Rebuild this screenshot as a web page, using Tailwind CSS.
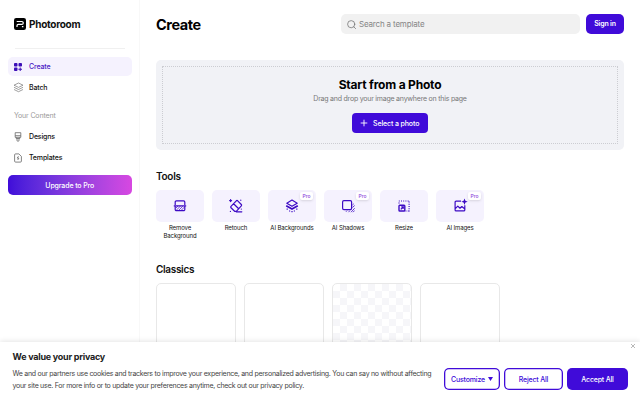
<!DOCTYPE html>
<html lang="en">
<head>
<meta charset="utf-8">
<title>Photoroom</title>
<script src="https://cdn.jsdelivr.net/npm/@tailwindcss/browser@4"></script>
</head>
<body class="relative flex h-[400px] w-[640px] overflow-hidden bg-white font-['Inter',sans-serif] text-[#111]">
  <aside class="flex h-full w-[140px] shrink-0 flex-col border-r border-[#f8f8f8] pr-[7.5px] pl-2">
    <div class="ml-1.5 mt-[18px] flex h-3 items-center gap-[3px]">
      <svg class="size-3 shrink-0" viewBox="0 0 12 12" fill="none"><rect width="12" height="12" rx="2.2" fill="#000"/><path d="M2.7 3.5H7.8a1.4 1.4 0 0 1 0 2.9H4.3a1.3 1.3 0 0 0-1.3 1.3V8.9M7.9 8.6h1.5" stroke="#fff" stroke-width="1.2"/></svg>
      <span class="text-[10px] font-bold tracking-[-0.28px] whitespace-nowrap">Photoroom</span>
    </div>
    <div class="mx-[7px] mt-[18px] h-px bg-[#f0f0f0]"></div>
    <nav class="mt-2 flex flex-col text-[7px] font-medium tracking-[-0.15px]">
      <a class="flex h-[19px] items-center gap-[7px] rounded-[5px] bg-[#f5f2fe] pl-[6px] text-[#4a20c4]">
        <svg class="size-2" viewBox="0 0 8 8" fill="#3d10b8"><rect width="3.5" height="3.5" rx=".9"/><rect x="4.5" width="3.5" height="3.5" rx=".9"/><rect y="4.5" width="3.5" height="3.5" rx=".9"/><path d="M5.7 4.4h1v1.3H8v1H6.7V8h-1V6.7H4.4v-1h1.3z"/></svg><span class="pt-[2px]">Create</span>
      </a>
      <a class="mt-[2px] flex h-[19px] items-center gap-[5px] pl-[5px]">
        <svg class="size-[11px]" viewBox="0 0 11 11" fill="none" stroke="#777" stroke-width=".7" stroke-linejoin="round"><path d="M5.5 1L10 3.2 5.5 5.4 1 3.2zM1 5.3L5.5 7.5 10 5.3M1 7.5L5.5 9.7 10 7.5"/></svg><span class="pt-[2px]">Batch</span>
      </a>
      <span class="mt-[13px] pl-1.5 leading-[11px] font-normal text-[#999]">Your Content</span>
      <a class="mt-[6px] flex h-[19px] items-center gap-[6px] pl-[5px]">
        <svg class="size-[10px]" viewBox="0 0 10 10" fill="none" stroke="#666" stroke-width=".8" stroke-linejoin="round"><path d="M2.2.7h5.6v4.6H2.2zM2.2 3.7h5.6M3.2 5.3v1.2h3.6V5.3M4 6.5v1.8a1 1 0 0 0 2 0V6.5"/></svg><span class="pt-[2px]">Designs</span>
      </a>
      <a class="mt-[2px] flex h-[19px] items-center gap-[6px] pl-[5px]">
        <svg class="size-[10px]" viewBox="0 0 10 10" fill="none" stroke="#666" stroke-width=".8" stroke-linejoin="round"><path d="M2.6.9h3.2L8.4 3.4v4.7a1 1 0 0 1-1 1H2.6a1 1 0 0 1-1-1V1.9a1 1 0 0 1 1-1zM5.5 3.2L4.2 5.1h1.7L4.7 7"/></svg><span class="pt-[2px]">Templates</span>
      </a>
    </nav>
    <button class="mt-2 h-5 rounded-[5px] bg-linear-to-r from-[#400bd9] to-[#d748e1] pt-[2px] text-[7px] font-medium tracking-[-0.12px] text-white">Upgrade to Pro</button>
  </aside>

  <main class="flex w-[500px] flex-col pl-4 pr-4">
    <header class="mt-[14px] flex h-5 items-center">
      <h1 class="w-[184.5px] pt-px text-[14.5px] font-bold tracking-[-0.45px] text-black">Create</h1>
      <label class="flex h-5 w-[239.5px] items-center gap-[3px] rounded-[5px] bg-[#f1f1f1] pl-[6.5px] text-[8px] tracking-[-0.17px] text-[#858585]">
        <svg class="size-[9px]" viewBox="0 0 9 9" fill="none" stroke="#777" stroke-width=".8" stroke-linecap="round"><circle cx="4.2" cy="4.2" r="3.6"/><path d="M6.8 6.8L8.6 8.6"/></svg>
        <span>Search a template</span>
      </label>
      <button class="ml-1.5 h-5 w-[38px] rounded-[5px] bg-[#400bd9] pt-px text-[7px] font-semibold tracking-[-0.18px] text-white">Sign in</button>
    </header>

    <section class="mt-[26px] h-[90px] rounded-[5px] bg-[#f1f2f6] p-[6px]">
      <div class="flex h-full flex-col items-center border border-dotted border-[#cccdd2]">
        <h2 class="mt-[10px] text-[12px] leading-4 font-bold tracking-[-0.2px] text-black">Start from a Photo</h2>
        <p class="mt-px text-[7px] leading-[10px] tracking-[-0.22px] text-[#777]">Drag and drop your image anywhere on this page</p>
        <button class="mt-[9px] flex h-5 w-[76px] items-center gap-[5px] rounded-[4px] bg-[#400bd9] pl-2 text-[7px] font-medium tracking-[-0.12px] whitespace-nowrap text-white">
          <svg class="size-2 shrink-0" viewBox="0 0 8 8" stroke="#fff" stroke-width=".9"><path d="M4 .7v6.6M.7 4h6.6"/></svg><span class="pt-[2px]">Select a photo</span>
        </button>
      </div>
    </section>

    <h3 class="mt-[20px] text-[10px] leading-3 font-semibold tracking-[-0.28px]">Tools</h3>
    <section class="mt-2 flex gap-2 text-center text-[6px] leading-[8px] tracking-[-0.1px]">
      <div class="w-12">
        <div class="flex h-8 items-center justify-center rounded-[5px] bg-[#f5f2fe]">
          <svg class="size-[14px]" viewBox="0 0 14 14" fill="none" stroke="#3d0ac4" stroke-width="1.2"><path d="M2.2 6V3a1.2 1.2 0 0 1 1.2-1.2h7.2A1.2 1.2 0 0 1 11.8 3v3M.8 6.8h12.4M2.2 7.5v3a1.2 1.2 0 0 0 1.2 1.2h7.2a1.2 1.2 0 0 0 1.2-1.2v-3"/><path d="M3 9l2-2M3.2 11.3l4.2-4.2M5.7 11.3l4.2-4.2M8.2 11.3l3.2-3.2" stroke-width=".7"/></svg>
        </div>
        <p class="mt-[2px]">Remove<br>Background</p>
      </div>
      <div class="w-12">
        <div class="flex h-8 items-center justify-center rounded-[5px] bg-[#f5f2fe]">
          <svg class="size-[14px]" viewBox="0 0 14 14" fill="none" stroke="#3d0ac4" stroke-width="1.2" stroke-linejoin="round" stroke-linecap="round"><path d="M2 7.4l5.3-5.6a1 1 0 0 1 1.4 0l3.6 3.7a1 1 0 0 1 0 1.4l-5 5.4H5.6L2 8.8a1 1 0 0 1 0-1.4zM4.6 4.8l5.1 5M7.3 12.8h5.5M1.6.6v2M.6 1.6h2M11.8 1.2v.1M1.4 12.3v.1M12.3 10v.1"/></svg>
        </div>
        <p class="mt-[2px]">Retouch</p>
      </div>
      <div class="w-12">
        <div class="relative flex h-8 items-center justify-center rounded-[5px] bg-[#f5f2fe]">
          <svg class="size-[14px]" viewBox="0 0 14 14" fill="none" stroke="#3d0ac4" stroke-width="1.2" stroke-linejoin="round"><path d="M7 1.1l5.2 3.1L7 7.3 1.8 4.2z"/><path d="M1.2 6.8L7 10l5.8-3.2" stroke-width="1.8"/><path d="M1.6 10.2h1.2M4 12h1.2M6.4 12.6h1.2M8.8 12H10M11.2 10.2h1.2"/></svg>
          <span class="absolute top-[2px] right-[3px] h-[8px] w-[13px] rounded-[2px] bg-white text-[5px] leading-[8px] font-medium text-[#8e48dc] shadow-sm">Pro</span>
        </div>
        <p class="-mx-1 mt-[2px] whitespace-nowrap">AI Backgrounds</p>
      </div>
      <div class="w-12">
        <div class="relative flex h-8 items-center justify-center rounded-[5px] bg-[#f5f2fe]">
          <svg class="size-[14px]" viewBox="0 0 14 14" fill="none" stroke="#3d0ac4" stroke-width="1.2"><rect x="1.6" y="1.6" width="9" height="9" rx="1.3"/><path d="M11.4 6l1.4-1.2M11.4 8.5l2.3-2M5 12.8l1-1.2M7.5 13.2l1.4-1.6M10 13.2l3.7-4M12 13.2l1.7-1.7" stroke-width=".8"/></svg>
          <span class="absolute top-[2px] right-[3px] h-[8px] w-[13px] rounded-[2px] bg-white text-[5px] leading-[8px] font-medium text-[#8e48dc] shadow-sm">Pro</span>
        </div>
        <p class="mt-[2px] whitespace-nowrap">AI Shadows</p>
      </div>
      <div class="w-12">
        <div class="flex h-8 items-center justify-center rounded-[5px] bg-[#f5f2fe]">
          <svg class="size-[14px]" viewBox="0 0 14 14" fill="none" stroke="#3d0ac4" stroke-width="1.2"><path d="M1.8 2h11M12.1 2.6v10M2 3.5v1.4M8.5 12H12" stroke-dasharray="1 1.2"/><rect x="2" y="6.2" width="5.8" height="5.8" rx=".8" stroke-width="1.4"/><path d="M3.8 10.3l2.5-2.5M4.3 7.8h2v2"/></svg>
        </div>
        <p class="mt-[2px]">Resize</p>
      </div>
      <div class="w-12">
        <div class="relative flex h-8 items-center justify-center rounded-[5px] bg-[#f5f2fe]">
          <svg class="size-[14px] overflow-visible" viewBox="0 0 14 14" fill="none" stroke="#3d0ac4" stroke-width="1.2" stroke-linejoin="round"><path d="M8 2.2H3.1a1 1 0 0 0-1 1v7.7a1 1 0 0 0 1 1h7.7a1 1 0 0 0 1-1V6.3M2.3 9.7l2.5-2.6 2.2 2.1 1.8-1.7 2.8 2.3"/><path d="M11.5-.5l.9 2.3 2.3.9-2.3.9-.9 2.3-.9-2.3-2.3-.9 2.3-.9z" fill="#3d0ac4" stroke="none"/></svg>
          <span class="absolute top-[2px] right-[3px] h-[8px] w-[13px] rounded-[2px] bg-white text-[5px] leading-[8px] font-medium text-[#8e48dc] shadow-sm">Pro</span>
        </div>
        <p class="mt-[2px] whitespace-nowrap">AI Images</p>
      </div>
    </section>

    <h3 class="mt-[23px] text-[10px] leading-3 font-semibold tracking-[-0.32px]">Classics</h3>
    <section class="mt-2 flex gap-2">
      <div class="h-20 w-20 rounded-[5px] border border-[#e8e8e8]"></div>
      <div class="h-20 w-20 rounded-[5px] border border-[#e8e8e8]"></div>
      <div class="h-20 w-20 rounded-[5px] border border-[#e8e8e8] bg-[conic-gradient(#f6f6f9_25%,#fff_0_50%,#f6f6f9_0_75%,#fff_0)] bg-size-[14px_14px]"></div>
      <div class="h-20 w-20 rounded-[5px] border border-[#e8e8e8]"></div>
    </section>
  </main>

  <section class="absolute inset-x-0 bottom-0 flex h-[58px] bg-white pl-[12.5px] shadow-[0_-1px_5px_rgba(0,0,0,0.1)]">
    <div class="w-[431.5px] shrink-0 pt-[8px]">
      <h2 class="pt-px text-[9px] leading-3 font-bold tracking-[-0.24px] text-[#212121]">We value your privacy</h2>
      <p class="mt-[5px] text-[7px] leading-3 tracking-[-0.278px] whitespace-nowrap text-[#444]">We and our partners use cookies and trackers to improve your experience, and personalized advertising. You can say no without affecting<br>your site use. For more info or to update your preferences anytime, check out our privacy policy.</p>
    </div>
    <div class="mt-[26px] flex h-[22px] gap-1 text-[7px] font-medium tracking-[-0.18px] text-[#400bd9]">
      <button class="flex w-[56px] items-center justify-center gap-[3px] rounded-[5px] shadow-[inset_0_0_0_1.3px_#400bd9]"><span class="pt-[2px]">Customize</span><svg class="h-1 w-[5px]" viewBox="0 0 5 4" fill="#400bd9"><path d="M0 0h5L2.5 4z"/></svg></button>
      <button class="w-[59px] rounded-[5px] pt-[2px] shadow-[inset_0_0_0_1.3px_#400bd9]">Reject All</button>
      <button class="w-[61px] rounded-[5px] bg-[#400bd9] pt-[2px] text-white">Accept All</button>
    </div>
    <svg class="absolute top-[2px] right-[5px] size-[4px]" viewBox="0 0 4 4" stroke="#888" stroke-width=".6"><path d="M0 0l4 4M4 0L0 4"/></svg>
  </section>
</body>
</html>
